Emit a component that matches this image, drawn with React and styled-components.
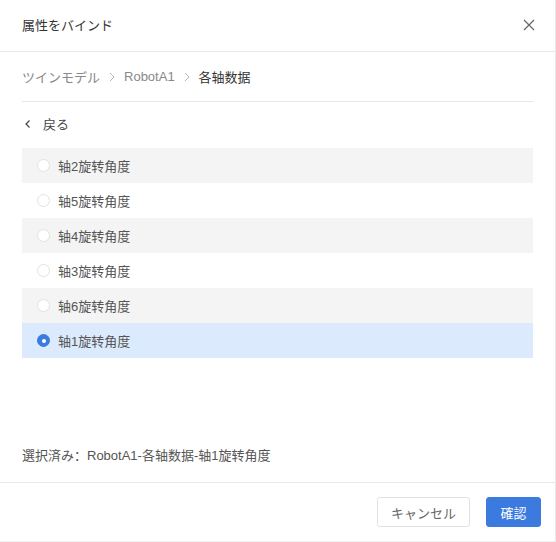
import React, { useState } from "react";
import styled, { createGlobalStyle } from "styled-components";

const GlobalStyle = createGlobalStyle`
  html, body { margin: 0; padding: 0; background: #fff; }
  body { font-family: "Liberation Sans", "Noto Sans CJK SC", "Noto Sans CJK JP", sans-serif; font-size: 13px; }
  * { box-sizing: border-box; }
`;

const items = [
  { id: 2, label: "轴2旋转角度" },
  { id: 5, label: "轴5旋转角度" },
  { id: 4, label: "轴4旋转角度" },
  { id: 3, label: "轴3旋转角度" },
  { id: 6, label: "轴6旋转角度" },
  { id: 1, label: "轴1旋转角度" },
];

const Chevron = () => (
  <svg width="6" height="10" viewBox="0 0 6 10">
    <path d="M1 1l4 4-4 4" stroke="#b5b5b5" strokeWidth="1" fill="none" />
  </svg>
);

export default function App() {
  const [selected, setSelected] = useState(1);
  const sel = items.find((i) => i.id === selected);

  return (
    <>
      <GlobalStyle />
      <Dialog>
        <Header>
          <Title>属性をバインド</Title>
          <Close aria-label="close">
            <svg width="12" height="12" viewBox="0 0 12 12">
              <path d="M1 1L11 11M11 1L1 11" stroke="#666" strokeWidth="1.2" fill="none" />
            </svg>
          </Close>
        </Header>
        <Body>
          <Crumbs>
            <Crumb>ツインモデル</Crumb>
            <Sep><Chevron /></Sep>
            <Crumb>RobotA1</Crumb>
            <Sep><Chevron /></Sep>
            <Crumb $current>各轴数据</Crumb>
          </Crumbs>
          <Back>
            <svg width="8" height="10" viewBox="0 0 8 10">
              <path d="M5.5 1.5L2 5l3.5 3.5" stroke="#444" strokeWidth="1.2" fill="none" />
            </svg>
            <span>戻る</span>
          </Back>
          <List>
            {items.map((it, i) => (
              <Row
                key={it.id}
                $striped={i % 2 === 0}
                $active={it.id === selected}
                onClick={() => setSelected(it.id)}
              >
                <Radio $checked={it.id === selected} />
                <span>{it.label}</span>
              </Row>
            ))}
          </List>
          <Selected>選択済み：RobotA1-各轴数据-{sel.label}</Selected>
        </Body>
        <Footer>
          <Button $w={93}>キャンセル</Button>
          <Button $w={55} $primary>確認</Button>
        </Footer>
      </Dialog>
    </>
  );
}

const Dialog = styled.div`
  width: 556px;
  height: 542px;
  display: flex;
  flex-direction: column;
  border-right: 1px solid #e8e8e8;
  border-bottom: 1px solid #eeeeee;
  background: #fff;
`;

const Header = styled.div`
  height: 52px;
  display: flex;
  align-items: center;
  justify-content: space-between;
  padding: 0 20px 2px 22px;
  border-bottom: 1px solid #e8e8e8;
`;

const Title = styled.div`
  color: #333;
`;

const Close = styled.div`
  display: flex;
  align-items: center;
`;

const Body = styled.div`
  flex: 1;
  display: flex;
  flex-direction: column;
  padding: 0 22px;
`;

const Crumbs = styled.div`
  height: 50px;
  display: flex;
  align-items: center;
  border-bottom: 1px solid #e6e6e6;
`;

const Crumb = styled.span`
  color: ${(p) => (p.$current ? "#333" : "#888")};
`;

const Sep = styled.span`
  display: flex;
  align-items: center;
  margin: 0 9px;
`;

const Back = styled.div`
  height: 46px;
  display: flex;
  align-items: center;
  gap: 11px;
  padding: 0 0 3px 2px;
  color: #444;
`;

const List = styled.div`
  display: flex;
  flex-direction: column;
`;

const Row = styled.div`
  height: 35px;
  display: flex;
  align-items: center;
  gap: 8px;
  padding-left: 15px;
  color: #555;
  cursor: pointer;
  background: ${(p) => (p.$active ? "#dbeafc" : p.$striped ? "#f4f4f4" : "#fff")};
`;

const Radio = styled.span`
  width: 13px;
  height: 13px;
  border-radius: 50%;
  background: ${(p) => (p.$checked ? "#3b7be0" : "#fff")};
  border: 1px solid ${(p) => (p.$checked ? "#3b7be0" : "#e2e2e2")};
  display: flex;
  align-items: center;
  justify-content: center;
  &::after {
    content: "";
    width: 4px;
    height: 4px;
    border-radius: 50%;
    background: #fff;
    display: ${(p) => (p.$checked ? "block" : "none")};
  }
`;

const Selected = styled.div`
  margin-top: auto;
  padding-bottom: 18px;
  color: #555;
`;

const Footer = styled.div`
  height: 59px;
  border-top: 1px solid #e8e8e8;
  display: flex;
  justify-content: flex-end;
  align-items: flex-start;
  gap: 16px;
  padding: 14px 14px 0 0;
`;

const Button = styled.button`
  height: 30px;
  width: ${(p) => p.$w}px;
  padding: 0;
  border-radius: 3px;
  font-family: inherit;
  font-size: 13px;
  border: 1px solid ${(p) => (p.$primary ? "#3b7be0" : "#e2e2e2")};
  background: ${(p) => (p.$primary ? "#3b7be0" : "#fff")};
  color: ${(p) => (p.$primary ? "#fff" : "#666")};
  cursor: pointer;
`;
